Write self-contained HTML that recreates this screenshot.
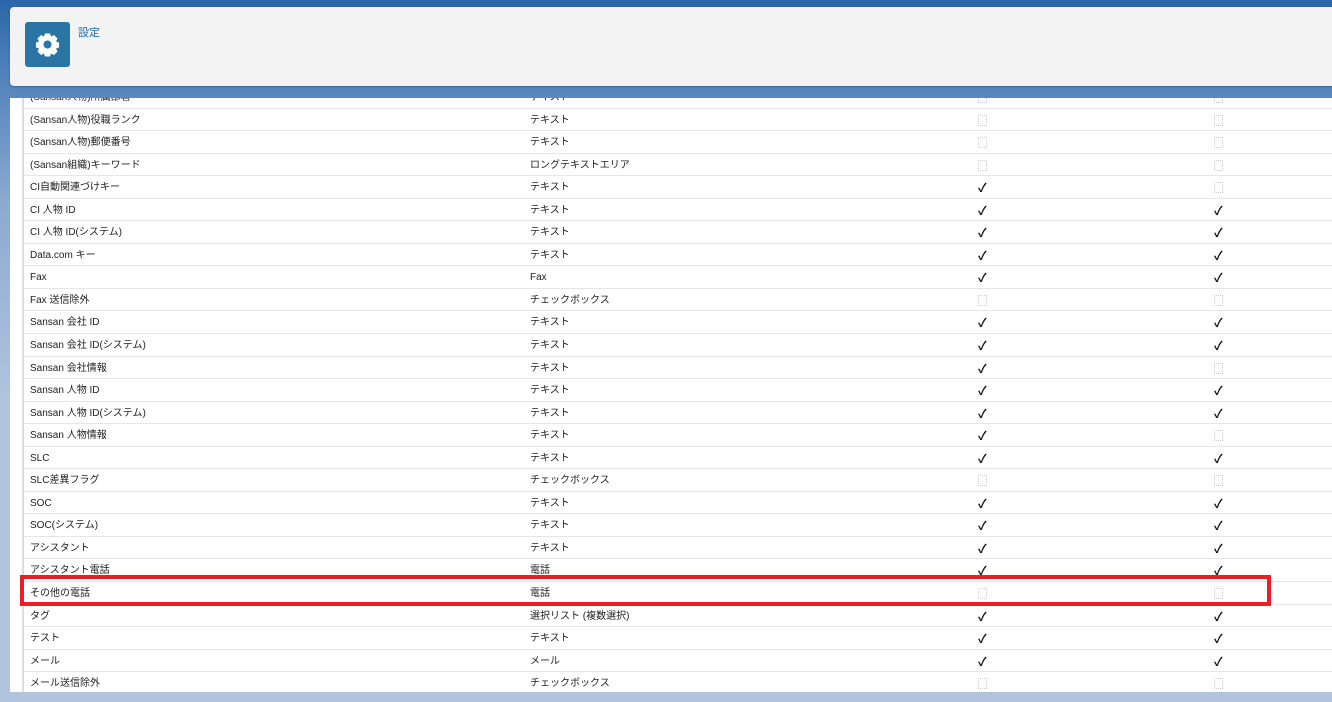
<!DOCTYPE html>
<html><head><meta charset="utf-8"><style>
body{margin:0;width:1332px;height:702px;overflow:hidden;position:relative;font-family:"Liberation Sans","Noto Sans CJK JP",sans-serif;
background:linear-gradient(#2a66a8 0px,#4a7db8 60px,#8aaad0 200px,#b0c4de 400px,#b0c4de 702px);}
.hdr{position:absolute;left:10px;top:7px;width:1330px;height:79px;background:#f3f3f3;border-radius:4px;box-shadow:0 1px 2px rgba(0,0,0,.25)}
.ic{position:absolute;left:15px;top:15px;width:45px;height:45px;background:#2a75a3;border-radius:3px}
.ttl{position:absolute;left:68px;top:17px;font-size:11px;color:#1a6fb5}
.panel{position:absolute;left:10px;top:98px;width:1322px;height:594px;background:#fff;overflow:hidden}
.inner{position:absolute;left:12px;top:0;right:0;bottom:0;border-left:2px solid #ddd;overflow:hidden}
.rows{position:absolute;left:0;top:-12px;right:0}
.r{height:22.56px;box-sizing:border-box;border-bottom:1px solid #e6e6e6;position:relative;font-size:10px;color:#222;line-height:24px}
.r span{position:absolute;top:0}
.a{left:6px}.b{left:506px}
.c1{left:954px}.c2{left:1190px}
.ck{font-size:12px;font-weight:bold;color:#111}
.un{display:inline-block;width:7px;height:9px;border:1px dotted #ccc;margin-top:6px}
.red{position:absolute;left:20px;top:575px;width:1243px;height:23px;border:4px solid #ee1c25}
</style></head><body>
<div class="hdr"><div class="ic"><svg width="45" height="45" viewBox="0 0 45 45"><g fill="#fff" transform="translate(22.5 22.5)"><path d="M-2.5-11h5l1 3 3-1.5 3.5 3.5-1.5 3 3 1v5l-3 1 1.5 3-3.5 3.5-3-1.5-1 3h-5l-1-3-3 1.5-3.5-3.5 1.5-3-3-1v-5l3-1-1.5-3 3.5-3.5 3 1.5z"/></g><circle cx="22.5" cy="22.5" r="4" fill="#2a75a3"/></svg></div><div class="ttl">設定</div></div>
<div class="panel"><div class="inner"><div class="rows">
<div class="r"><span class="a">(Sansan人物)所属部署</span><span class="b">テキスト</span><span class="c1"><i class="un"></i></span><span class="c2"><i class="un"></i></span></div>
<div class="r"><span class="a">(Sansan人物)役職ランク</span><span class="b">テキスト</span><span class="c1"><i class="un"></i></span><span class="c2"><i class="un"></i></span></div>
<div class="r"><span class="a">(Sansan人物)郵便番号</span><span class="b">テキスト</span><span class="c1"><i class="un"></i></span><span class="c2"><i class="un"></i></span></div>
<div class="r"><span class="a">(Sansan組織)キーワード</span><span class="b">ロングテキストエリア</span><span class="c1"><i class="un"></i></span><span class="c2"><i class="un"></i></span></div>
<div class="r"><span class="a">CI自動関連づけキー</span><span class="b">テキスト</span><span class="c1 ck">✓</span><span class="c2"><i class="un"></i></span></div>
<div class="r"><span class="a">CI 人物 ID</span><span class="b">テキスト</span><span class="c1 ck">✓</span><span class="c2 ck">✓</span></div>
<div class="r"><span class="a">CI 人物 ID(システム)</span><span class="b">テキスト</span><span class="c1 ck">✓</span><span class="c2 ck">✓</span></div>
<div class="r"><span class="a">Data.com キー</span><span class="b">テキスト</span><span class="c1 ck">✓</span><span class="c2 ck">✓</span></div>
<div class="r"><span class="a">Fax</span><span class="b">Fax</span><span class="c1 ck">✓</span><span class="c2 ck">✓</span></div>
<div class="r"><span class="a">Fax 送信除外</span><span class="b">チェックボックス</span><span class="c1"><i class="un"></i></span><span class="c2"><i class="un"></i></span></div>
<div class="r"><span class="a">Sansan 会社 ID</span><span class="b">テキスト</span><span class="c1 ck">✓</span><span class="c2 ck">✓</span></div>
<div class="r"><span class="a">Sansan 会社 ID(システム)</span><span class="b">テキスト</span><span class="c1 ck">✓</span><span class="c2 ck">✓</span></div>
<div class="r"><span class="a">Sansan 会社情報</span><span class="b">テキスト</span><span class="c1 ck">✓</span><span class="c2"><i class="un"></i></span></div>
<div class="r"><span class="a">Sansan 人物 ID</span><span class="b">テキスト</span><span class="c1 ck">✓</span><span class="c2 ck">✓</span></div>
<div class="r"><span class="a">Sansan 人物 ID(システム)</span><span class="b">テキスト</span><span class="c1 ck">✓</span><span class="c2 ck">✓</span></div>
<div class="r"><span class="a">Sansan 人物情報</span><span class="b">テキスト</span><span class="c1 ck">✓</span><span class="c2"><i class="un"></i></span></div>
<div class="r"><span class="a">SLC</span><span class="b">テキスト</span><span class="c1 ck">✓</span><span class="c2 ck">✓</span></div>
<div class="r"><span class="a">SLC差異フラグ</span><span class="b">チェックボックス</span><span class="c1"><i class="un"></i></span><span class="c2"><i class="un"></i></span></div>
<div class="r"><span class="a">SOC</span><span class="b">テキスト</span><span class="c1 ck">✓</span><span class="c2 ck">✓</span></div>
<div class="r"><span class="a">SOC(システム)</span><span class="b">テキスト</span><span class="c1 ck">✓</span><span class="c2 ck">✓</span></div>
<div class="r"><span class="a">アシスタント</span><span class="b">テキスト</span><span class="c1 ck">✓</span><span class="c2 ck">✓</span></div>
<div class="r"><span class="a">アシスタント電話</span><span class="b">電話</span><span class="c1 ck">✓</span><span class="c2 ck">✓</span></div>
<div class="r"><span class="a">その他の電話</span><span class="b">電話</span><span class="c1"><i class="un"></i></span><span class="c2"><i class="un"></i></span></div>
<div class="r"><span class="a">タグ</span><span class="b">選択リスト (複数選択)</span><span class="c1 ck">✓</span><span class="c2 ck">✓</span></div>
<div class="r"><span class="a">テスト</span><span class="b">テキスト</span><span class="c1 ck">✓</span><span class="c2 ck">✓</span></div>
<div class="r"><span class="a">メール</span><span class="b">メール</span><span class="c1 ck">✓</span><span class="c2 ck">✓</span></div>
<div class="r"><span class="a">メール送信除外</span><span class="b">チェックボックス</span><span class="c1"><i class="un"></i></span><span class="c2"><i class="un"></i></span></div>
</div></div></div>
<div class="red"></div>
</body></html>
